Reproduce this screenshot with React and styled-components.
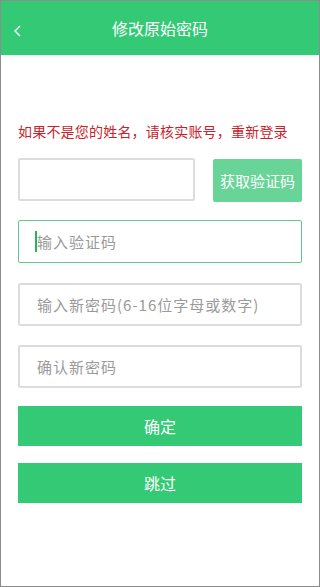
import React from 'react'
import styled, { createGlobalStyle } from 'styled-components'

const Global = createGlobalStyle`
    html, body {
        margin: 0;
        padding: 0;
        background: #fff;
    }
    * {
        box-sizing: border-box;
    }
    body {
        font-family: "Noto Sans CJK SC", "Noto Sans", sans-serif;
    }
`

const Frame = styled.div`
    width: 320px;
    height: 587px;
    border: 1px solid #8c8c8c;
    background: #fff;
    display: flex;
    flex-direction: column;
    overflow: hidden;
`

const Header = styled.div`
    flex: none;
    height: 54px;
    background: #33c975;
    display: flex;
    align-items: center;
    justify-content: center;
    position: relative;
    color: #fff;
    font-size: 16px;
    box-shadow: 0 2px 3px rgba(150, 200, 220, 0.15);
`

const Back = styled.svg`
    position: absolute;
    left: 12px;
    top: 24px;
    width: 10px;
    height: 12px;
`

const Content = styled.div`
    padding: 66px 17px 0;
    display: flex;
    flex-direction: column;
`

const Warning = styled.p`
    margin: 0 0 17px;
    font-size: 14px;
    line-height: 20px;
    letter-spacing: 0.2px;
    color: #c8232c;
    white-space: nowrap;
`

const Row = styled.div`
    display: flex;
    gap: 18px;
    margin-bottom: 18px;
`

const Field = styled.div`
    flex: none;
    width: ${p => (p.$short ? '177px' : '100%')};
    height: 43px;
    border: ${p => (p.$active ? '1.5px solid #5ecb8e' : '2px solid #dcdcdc')};
    border-radius: 2px;
    display: flex;
    align-items: center;
    padding-left: 17px;
    margin-bottom: ${p => p.$gap || 0}px;
    font-size: 15px;
    letter-spacing: 1px;
    color: #9a9a9a;
    white-space: nowrap;
`

const Caret = styled.span`
    display: inline-block;
    width: 2px;
    height: 21px;
    background: #1fb85f;
    margin-left: -1px;
`

const CodeButton = styled.button`
    flex: 0 0 89px;
    height: 43px;
    margin-top: 1px;
    border: none;
    border-radius: 2px;
    background: #68d498;
    color: #fff;
    font-family: inherit;
    font-size: 15px;
    padding: 0;
`

const Submit = styled.button`
    flex: none;
    height: 40px;
    border: none;
    background: #33c975;
    color: #fff;
    font-family: inherit;
    font-size: 16px;
    padding: 0;
    margin-bottom: ${p => p.$gap || 0}px;
`

export default function App() {
    return (
        <>
            <Global />
            <Frame>
                <Header>
                    <Back viewBox="0 0 10 12">
                        <path d="M7 1 L2 6 L7 11" fill="none" stroke="#fff" strokeWidth="1.4" />
                    </Back>
                    修改原始密码
                </Header>
                <Content>
                    <Warning>如果不是您的姓名，请核实账号，重新登录</Warning>
                    <Row>
                        <Field $short />
                        <CodeButton>获取验证码</CodeButton>
                    </Row>
                    <Field $active $gap={20}>
                        <Caret />输入验证码
                    </Field>
                    <Field $gap={19}>输入新密码(6-16位字母或数字)</Field>
                    <Field $gap={18}>确认新密码</Field>
                    <Submit $gap={17}>确定</Submit>
                    <Submit>跳过</Submit>
                </Content>
            </Frame>
        </>
    )
}
